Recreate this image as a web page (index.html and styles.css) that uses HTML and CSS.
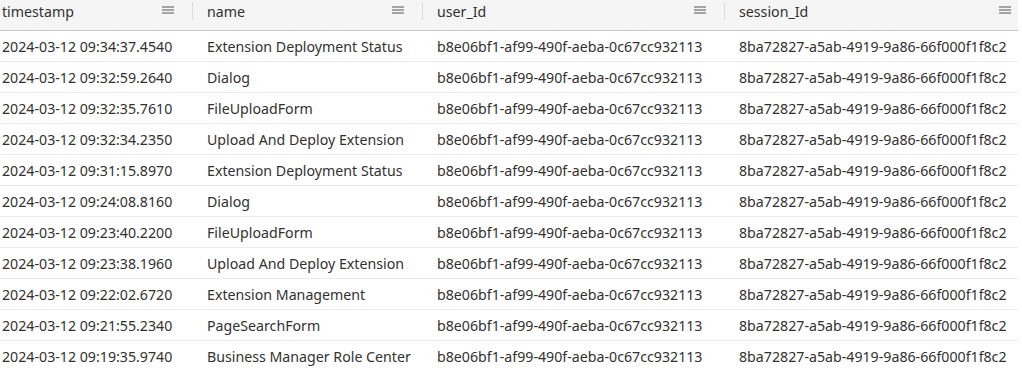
FILE: index.html
```html
<!DOCTYPE html>
<html>
<head>
<meta charset="utf-8">
<link rel="stylesheet" href="styles.css">
</head>
<body>
<div class="grid">
  <div class="row head">
    <div class="cell c1"><span>timestamp</span><svg class="menu" viewBox="0 0 12 8"><path d="M0 1h12M0 4h12M0 7h12"/></svg><i class="sep"></i></div>
    <div class="cell c2"><span>name</span><svg class="menu" viewBox="0 0 12 8"><path d="M0 1h12M0 4h12M0 7h12"/></svg><i class="sep"></i></div>
    <div class="cell c3"><span>user_Id</span><svg class="menu" viewBox="0 0 12 8"><path d="M0 1h12M0 4h12M0 7h12"/></svg><i class="sep"></i></div>
    <div class="cell c4"><span>session_Id</span><svg class="menu" viewBox="0 0 12 8"><path d="M0 1h12M0 4h12M0 7h12"/></svg></div>
  </div>
  <div class="row"><div class="cell c1">2024-03-12 09:34:37.4540</div><div class="cell c2">Extension Deployment Status</div><div class="cell c3">b8e06bf1-af99-490f-aeba-0c67cc932113</div><div class="cell c4">8ba72827-a5ab-4919-9a86-66f000f1f8c2</div></div>
  <div class="row"><div class="cell c1">2024-03-12 09:32:59.2640</div><div class="cell c2">Dialog</div><div class="cell c3">b8e06bf1-af99-490f-aeba-0c67cc932113</div><div class="cell c4">8ba72827-a5ab-4919-9a86-66f000f1f8c2</div></div>
  <div class="row"><div class="cell c1">2024-03-12 09:32:35.7610</div><div class="cell c2">FileUploadForm</div><div class="cell c3">b8e06bf1-af99-490f-aeba-0c67cc932113</div><div class="cell c4">8ba72827-a5ab-4919-9a86-66f000f1f8c2</div></div>
  <div class="row"><div class="cell c1">2024-03-12 09:32:34.2350</div><div class="cell c2">Upload And Deploy Extension</div><div class="cell c3">b8e06bf1-af99-490f-aeba-0c67cc932113</div><div class="cell c4">8ba72827-a5ab-4919-9a86-66f000f1f8c2</div></div>
  <div class="row"><div class="cell c1">2024-03-12 09:31:15.8970</div><div class="cell c2">Extension Deployment Status</div><div class="cell c3">b8e06bf1-af99-490f-aeba-0c67cc932113</div><div class="cell c4">8ba72827-a5ab-4919-9a86-66f000f1f8c2</div></div>
  <div class="row"><div class="cell c1">2024-03-12 09:24:08.8160</div><div class="cell c2">Dialog</div><div class="cell c3">b8e06bf1-af99-490f-aeba-0c67cc932113</div><div class="cell c4">8ba72827-a5ab-4919-9a86-66f000f1f8c2</div></div>
  <div class="row"><div class="cell c1">2024-03-12 09:23:40.2200</div><div class="cell c2">FileUploadForm</div><div class="cell c3">b8e06bf1-af99-490f-aeba-0c67cc932113</div><div class="cell c4">8ba72827-a5ab-4919-9a86-66f000f1f8c2</div></div>
  <div class="row"><div class="cell c1">2024-03-12 09:23:38.1960</div><div class="cell c2">Upload And Deploy Extension</div><div class="cell c3">b8e06bf1-af99-490f-aeba-0c67cc932113</div><div class="cell c4">8ba72827-a5ab-4919-9a86-66f000f1f8c2</div></div>
  <div class="row"><div class="cell c1">2024-03-12 09:22:02.6720</div><div class="cell c2">Extension Management</div><div class="cell c3">b8e06bf1-af99-490f-aeba-0c67cc932113</div><div class="cell c4">8ba72827-a5ab-4919-9a86-66f000f1f8c2</div></div>
  <div class="row"><div class="cell c1">2024-03-12 09:21:55.2340</div><div class="cell c2">PageSearchForm</div><div class="cell c3">b8e06bf1-af99-490f-aeba-0c67cc932113</div><div class="cell c4">8ba72827-a5ab-4919-9a86-66f000f1f8c2</div></div>
  <div class="row"><div class="cell c1">2024-03-12 09:19:35.9740</div><div class="cell c2">Business Manager Role Center</div><div class="cell c3">b8e06bf1-af99-490f-aeba-0c67cc932113</div><div class="cell c4">8ba72827-a5ab-4919-9a86-66f000f1f8c2</div></div>
</div>
</body>
</html>
```
FILE: styles.css
```css
html, body {
  margin: 0;
  padding: 0;
  background: #ffffff;
}
body {
  font-family: "Noto Sans", "Open Sans", sans-serif;
  font-size: 14.2px;
  color: #323130;
  overflow: hidden;
}
.grid {
  width: 1018px;
}
.row {
  display: grid;
  grid-template-columns: 193px 230px 302px 293px;
  height: 30px;
  border-bottom: 1px solid #ebebeb;
  align-items: center;
}
.row:last-child {
  border-bottom: none;
}
.cell {
  white-space: nowrap;
  overflow: hidden;
  padding-left: 14px;
  line-height: 30px;
  padding-top: 2px;
}
.cell.c1 {
  padding-left: 2px;
}
.head {
  background: #f5f5f5;
  border-bottom: 1px solid #c8c8c8;
  align-items: start;
}
.head .cell {
  display: flex;
  align-items: center;
  height: 24px;
  line-height: 24px;
  padding-top: 0;
  position: relative;
}
.head .cell span {
  flex: 1;
}
.menu {
  width: 12px;
  height: 8px;
  margin-right: 19px;
  stroke: #555;
  stroke-width: 1.1;
  fill: none;
  margin-top: -4px;
}
.head .c4 .menu {
  margin-right: 7px;
}
.sep {
  position: absolute;
  right: 0;
  top: 2px;
  width: 1px;
  height: 18px;
  background: #dcdcdc;
}
```
